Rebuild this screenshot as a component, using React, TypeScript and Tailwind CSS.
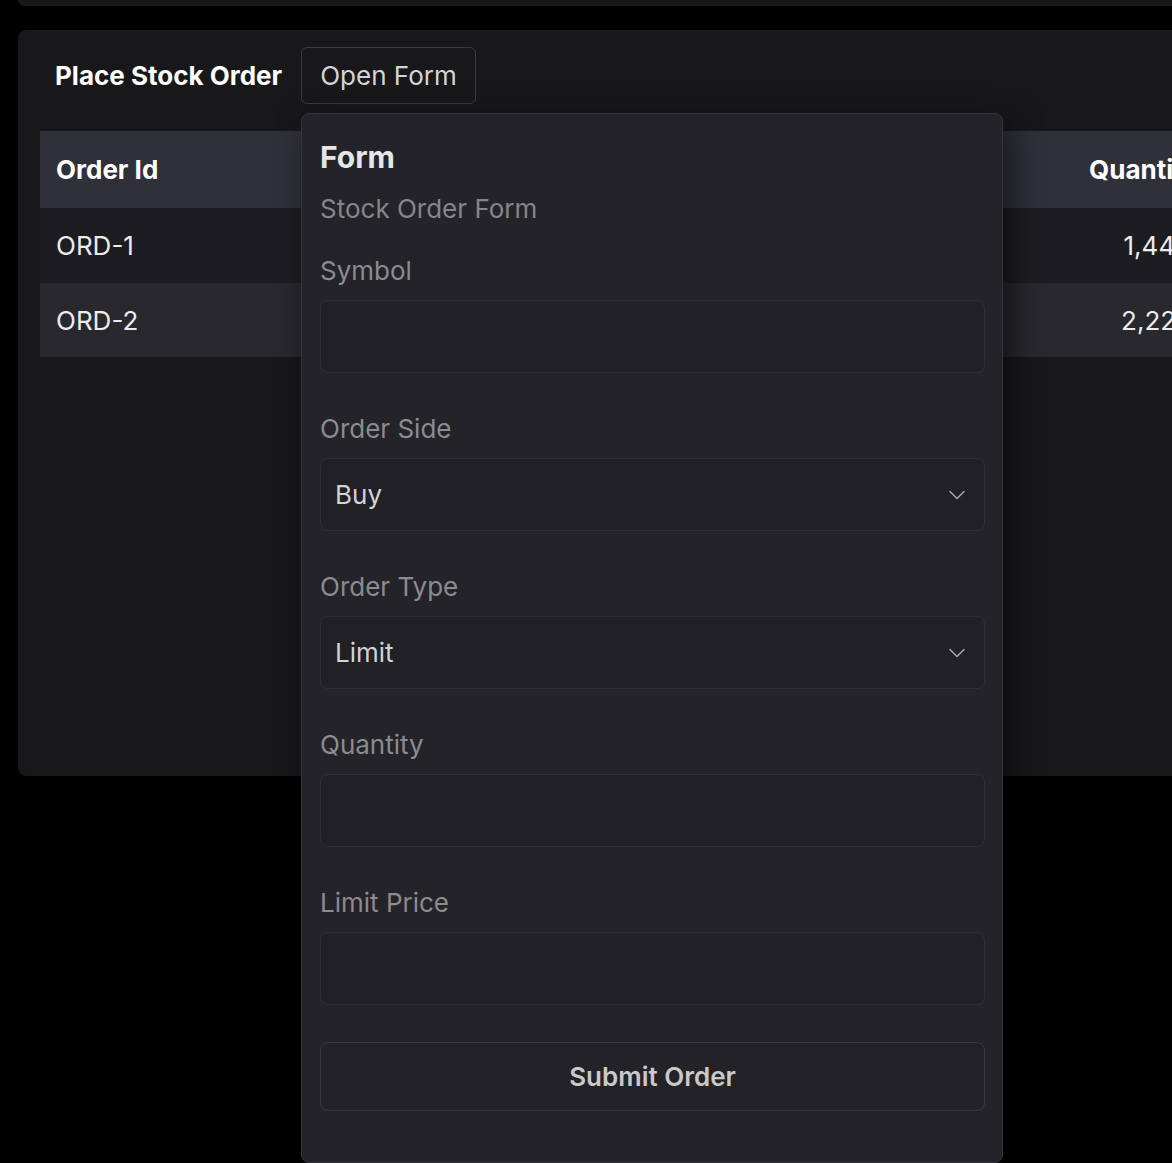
import React, { useState } from 'react'
import { ChevronDown } from 'lucide-react'

type Order = { id: string; quantity: string }

const orders: Order[] = [
    { id: 'ORD-1', quantity: '1,444' },
    { id: 'ORD-2', quantity: '2,222' },
]

const Field = ({ label, children, first }: { label: string; children: React.ReactNode; first?: boolean }) => {
    return (
        <div className={first ? 'mt-[30px]' : 'mt-[40px]'}>
            <p className='text-[26px] leading-[32px] text-[#8b8b90]'>{label}</p>
            <div className='mt-[13px]'>{children}</div>
        </div>
    )
}

const TextInput = () => {
    return (
        <input
            className='block h-[73px] w-full rounded-lg border border-[#2f2f35] bg-[#202025] px-[14px] text-[26px] text-[#d4d4d8] outline-0'
        />
    )
}

const SelectInput = ({ value }: { value: string }) => {
    return (
        <button
            type='button'
            className='flex h-[73px] w-full items-center justify-between rounded-lg border border-[#2f2f35] bg-[#202025] pl-[14px] pr-[13px] text-[26px] text-[#d2d2d6]'
        >
            <span>{value}</span>
            <ChevronDown size={28} strokeWidth={1.3} className='text-[#a5a5aa]' />
        </button>
    )
}

const OrderForm = () => {
    return (
        <div className='absolute left-0 top-[66px] z-20 h-[1050px] w-[702px] rounded-lg border border-[#34343a] bg-[#232329] pl-[18px] pr-[17px] pt-[25px] shadow-[8px_10px_30px_rgba(0,0,0,0.55)]'>
            <h2 className='text-[30px] font-bold leading-[36px] text-[#e6e6e8]'>Form</h2>
            <p className='mt-[18px] text-[26px] leading-[32px] text-[#85858a]'>Stock Order Form</p>

            <Field label='Symbol' first>
                <TextInput />
            </Field>
            <Field label='Order Side'>
                <SelectInput value='Buy' />
            </Field>
            <Field label='Order Type'>
                <SelectInput value='Limit' />
            </Field>
            <Field label='Quantity'>
                <TextInput />
            </Field>
            <Field label='Limit Price'>
                <TextInput />
            </Field>

            <button
                type='button'
                className='mt-[37px] h-[69px] w-full rounded-lg border border-[#38383e] bg-[#222227] text-[26px] font-semibold text-[#c9c9cc]'
            >
                Submit Order
            </button>
        </div>
    )
}

export default function App() {
    const [isOpen, setIsOpen] = useState<boolean>(true)

    return (
        <div className='relative h-[1163px] w-full overflow-hidden bg-black' style={{ fontFamily: 'Inter, "Noto Sans", sans-serif' }}>
            {/* panel above, cut off by the top of the page */}
            <div className='ml-[18px] h-[6px] w-[1300px] rounded-b-lg bg-[#18181b]' />

            <div className='ml-[18px] mt-[24px] h-[746px] w-[1300px] rounded-lg bg-[#18181b] px-[22px] pt-[17px]'>
                {/* header */}
                <div className='flex items-center'>
                    <h1 className='ml-[15px] w-[246px] text-[26px] font-bold leading-[32px] text-white'>Place Stock Order</h1>
                    <div className='relative'>
                        <button
                            type='button'
                            onClick={() => setIsOpen(!isOpen)}
                            className='h-[57px] w-[175px] rounded-md border border-[#3a3a40] bg-[#18181b] text-[26px] text-[#d4d4d8]'
                        >
                            Open Form
                        </button>
                        {isOpen && <OrderForm />}
                    </div>
                </div>

                {/* orders */}
                <div className='mt-[27px] w-[1171px]'>
                    <div className='flex h-[77px] items-center justify-between bg-[#30303a] pl-[16px] pr-[12px] text-[26px] font-bold text-white'>
                        <span>Order Id</span>
                        <span>Quantity</span>
                    </div>
                    {orders.map((order, index) => {
                        return (
                            <div
                                key={order.id}
                                className={`flex items-center justify-between pl-[16px] pr-[19px] text-[26px] text-[#ececef] ${index % 2 === 0 ? 'h-[75px] bg-[#1d1d21]' : 'h-[74px] bg-[#28282d]'}`}
                            >
                                <span>{order.id}</span>
                                <span>{order.quantity}</span>
                            </div>
                        )
                    })}
                </div>
            </div>
        </div>
    )
}
